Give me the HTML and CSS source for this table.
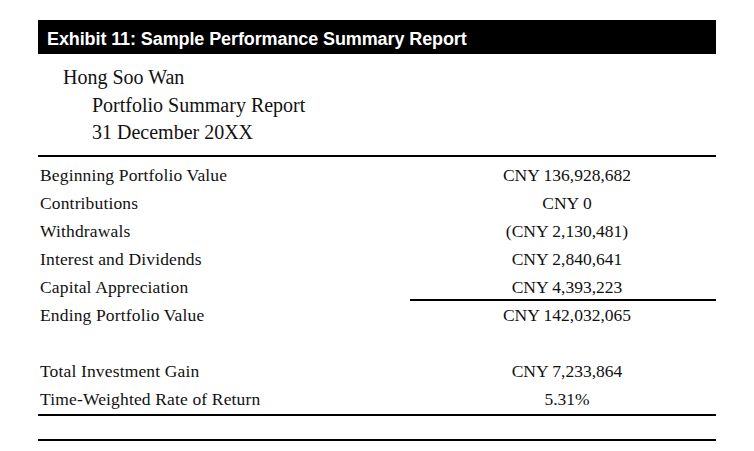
FILE: index.html
```html
<!DOCTYPE html>
<html>
<head>
<meta charset="utf-8">
<link rel="stylesheet" href="styles.css">
</head>
<body>
<div class="exhibit">
  <div class="title">Exhibit 11: Sample Performance Summary Report</div>
  <div class="head">
    <div class="name">Hong Soo Wan</div>
    <div class="sub">Portfolio Summary Report</div>
    <div class="sub">31 December 20XX</div>
  </div>
  <div class="table">
    <div class="row"><div class="label">Beginning Portfolio Value</div><div class="value">CNY 136,928,682</div></div>
    <div class="row"><div class="label">Contributions</div><div class="value">CNY 0</div></div>
    <div class="row"><div class="label">Withdrawals</div><div class="value">(CNY 2,130,481)</div></div>
    <div class="row"><div class="label">Interest and Dividends</div><div class="value">CNY 2,840,641</div></div>
    <div class="row"><div class="label">Capital Appreciation</div><div class="value underline">CNY 4,393,223</div></div>
    <div class="row"><div class="label">Ending Portfolio Value</div><div class="value">CNY 142,032,065</div></div>
    <div class="row"><div class="label"></div><div class="value"></div></div>
    <div class="row"><div class="label">Total Investment Gain</div><div class="value">CNY 7,233,864</div></div>
    <div class="row"><div class="label">Time-Weighted Rate of Return</div><div class="value">5.31%</div></div>
  </div>
  <div class="end"></div>
</div>
</body>
</html>
```

FILE: styles.css
```css
html, body {
  margin: 0;
  padding: 0;
  background: #fff;
}
.exhibit {
  width: 678px;
  margin-left: 38px;
  padding-top: 20px;
  color: #111;
  font-family: "Liberation Serif", "Times New Roman", serif;
}
.title {
  height: 34px;
  background: #000;
  color: #fff;
  font-family: "Liberation Sans", Arial, sans-serif;
  font-weight: bold;
  font-size: 18px;
  letter-spacing: -0.1px;
  line-height: 30px;
  padding-top: 4px;
  padding-left: 9px;
  box-sizing: border-box;
}
.head {
  padding-top: 10px;
  padding-bottom: 8px;
  border-bottom: 2px solid #000;
  font-size: 20px;
  line-height: 27.5px;
}
.name {
  padding-left: 25px;
}
.sub {
  padding-left: 54px;
}
.table {
  padding-top: 4px;
  border-bottom: 2px solid #000;
  padding-bottom: 1px;
}
.row {
  display: flex;
  height: 28px;
  font-size: 17.5px;
  line-height: 28px;
}
.label {
  flex: 1;
  padding-left: 2px;
  letter-spacing: 0.15px;
}
.value {
  width: 306px;
  box-sizing: border-box;
  padding-left: 8px;
  text-align: center;
  height: 28px;
}
.underline {
  border-bottom: 2px solid #000;
}
.end {
  margin-top: 23px;
  border-bottom: 2px solid #000;
}
```
